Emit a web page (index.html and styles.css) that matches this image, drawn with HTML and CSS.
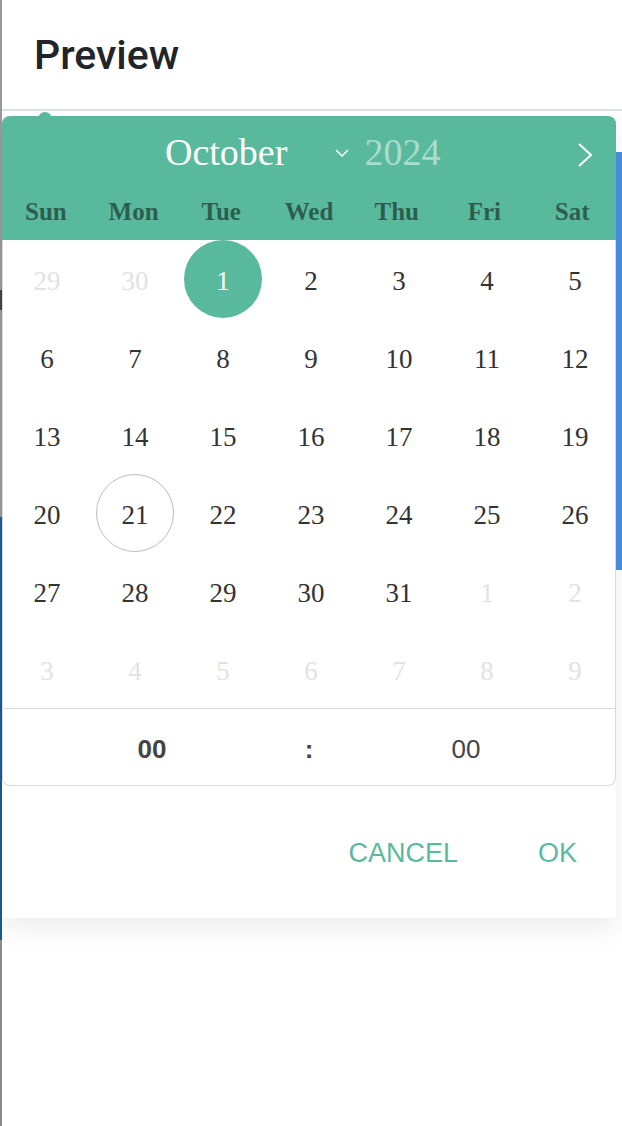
FILE: index.html
```html
<!DOCTYPE html>
<html lang="en">
<head>
<meta charset="utf-8">
<title>Preview</title>
<link rel="stylesheet" href="styles.css">
</head>
<body>
<div class="frame">
  <div class="rail"></div>
  <div class="main">
    <header class="page-head"><h1>Preview</h1></header>
    <div class="content">
      <div class="side-bar"></div>
    </div>
  </div>

  <div class="dialog">
    <div class="cal">
      <div class="cal-head">
        <div class="month-row">
          <span class="month">October</span>
          <svg class="caret" width="14" height="8" viewBox="0 0 14 8"><polyline points="1,1 7,7 13,1" fill="none" stroke="#fff" stroke-width="1.5"/></svg>
          <span class="year">2024</span>
          <svg class="next" width="14" height="24" viewBox="0 0 14 24"><polyline points="1,1 13,12 1,23" fill="none" stroke="#fff" stroke-width="2"/></svg>
        </div>
        <div class="weekdays">
          <span>Sun</span><span>Mon</span><span>Tue</span><span>Wed</span><span>Thu</span><span>Fri</span><span>Sat</span>
        </div>
      </div>
      <div class="days">
        <span class="muted">29</span><span class="muted">30</span><span class="sel">1</span><span>2</span><span>3</span><span>4</span><span>5</span>
        <span>6</span><span>7</span><span>8</span><span>9</span><span>10</span><span>11</span><span>12</span>
        <span>13</span><span>14</span><span>15</span><span>16</span><span>17</span><span>18</span><span>19</span>
        <span>20</span><span class="today">21</span><span>22</span><span>23</span><span>24</span><span>25</span><span>26</span>
        <span>27</span><span>28</span><span>29</span><span>30</span><span>31</span><span class="muted">1</span><span class="muted">2</span>
        <span class="muted">3</span><span class="muted">4</span><span class="muted">5</span><span class="muted">6</span><span class="muted">7</span><span class="muted">8</span><span class="muted">9</span>
      </div>
      <div class="time">
        <span class="t-hour">00</span>
        <span class="t-colon">:</span>
        <span class="t-min">00</span>
      </div>
    </div>
    <div class="actions">
      <button class="btn">CANCEL</button>
      <button class="btn">OK</button>
    </div>
  </div>
</div>
</body>
</html>
```

FILE: styles.css
```css
html, body {
  margin: 0;
  padding: 0;
  background: #fff;
}
body {
  width: 622px;
  height: 1126px;
  overflow: hidden;
}
.frame {
  position: relative;
  display: grid;
  grid-template-columns: 2px 1fr;
  height: 1126px;
}
.rail {
  background: linear-gradient(to bottom,
    #9a9a9a 0, #9a9a9a 290px,
    #444 290px, #444 310px,
    #9a9a9a 310px, #9a9a9a 517px,
    #1f5a8f 517px, #1f5a8f 940px,
    #8a8a8a 940px, #8a8a8a 100%);
}
.main {
  display: flex;
  flex-direction: column;
}
.page-head {
  border-bottom: 2px solid #dee2e6;
  display: flex;
  align-items: center;
  padding-left: 32px;
  box-sizing: border-box;
  height: 111px;
}
.page-head h1 {
  margin: 0;
  font-family: Roboto, "Liberation Sans", sans-serif;
  font-weight: 500;
  font-size: 41px;
  color: #212529;
}
.content {
  display: flex;
  justify-content: flex-end;
}
.side-bar {
  margin-top: 41px;
  width: 6px;
  height: 418px;
  background: #4a90e2;
}

/* dialog overlay */
.dialog {
  position: absolute;
  top: 111px;
  left: 2px;
  width: 614px;
  height: 807px;
  background: #fff;
  box-shadow: 0 12px 24px rgba(0, 0, 0, 0.07);
  display: flex;
  flex-direction: column;
}
.cal {
  margin-top: 5px;
  border: 1px solid #d9d9d9;
  border-top: 0;
  border-radius: 8px;
}
.cal-head {
  position: relative;
  margin: 0 -1px;
  background: #59b99c;
  border-radius: 8px 8px 0 0;
  height: 124px;
  display: flex;
  flex-direction: column;
}
.cal-head::before {
  content: "";
  position: absolute;
  top: -4px;
  left: 36px;
  width: 14px;
  height: 8px;
  background: #59b99c;
  border-radius: 7px 7px 0 0;
}
.month-row {
  height: 72px;
  display: flex;
  align-items: center;
  padding-left: 163px;
  padding-right: 24px;
}
.month {
  font-family: "Liberation Serif", serif;
  font-size: 38px;
  color: #fff;
}
.caret {
  margin-left: 48px;
  margin-top: 2px;
}
.year {
  margin-left: 15px;
  font-family: "Liberation Serif", serif;
  font-size: 38px;
  color: rgba(255, 255, 255, 0.5);
}
.next {
  margin-left: auto;
  margin-top: 6px;
}
.weekdays {
  height: 52px;
  display: grid;
  grid-template-columns: repeat(7, 1fr);
  align-items: center;
  text-align: center;
  font-family: "Liberation Serif", serif;
  font-weight: bold;
  font-size: 25px;
  color: rgba(0, 0, 0, 0.5);
  margin-top: -2px;
}
.days {
  display: grid;
  grid-template-columns: repeat(7, 88px);
  grid-auto-rows: 78px;
  margin-right: -4px;
  font-family: "Liberation Serif", serif;
  font-size: 27px;
  color: #333;
}
.days span {
  display: flex;
  align-items: center;
  justify-content: center;
  padding-top: 4px;
  box-sizing: border-box;
}
.days .muted {
  color: #e2e2e2;
}
.days .sel,
.days .today {
  width: 78px;
  height: 78px;
  border-radius: 50%;
  justify-self: center;
}
.days .sel {
  background: #59b99c;
  color: #fff;
}
.days .today {
  border: 1.5px solid #bdbdbd;
}
.time {
  border-top: 1px solid #d9d9d9;
  height: 77px;
  padding-top: 5px;
  box-sizing: border-box;
  display: flex;
  justify-content: center;
  align-items: center;
  gap: 100px;
  font-family: "Liberation Sans", Arial, sans-serif;
  font-size: 26px;
  color: #444;
}
.t-hour {
  width: 100px;
  text-align: center;
  font-weight: bold;
}
.t-colon {
  width: 14px;
  text-align: center;
  font-weight: bold;
}
.t-min {
  width: 100px;
  text-align: center;
}
.actions {
  margin-top: 43px;
  display: flex;
  justify-content: flex-end;
  align-items: center;
  gap: 80px;
  padding-right: 39px;
  height: 48px;
}
.btn {
  border: 0;
  background: none;
  padding: 0;
  font-family: "Liberation Sans", Arial, sans-serif;
  font-size: 27px;
  color: #59b99c;
  cursor: pointer;
}
```
